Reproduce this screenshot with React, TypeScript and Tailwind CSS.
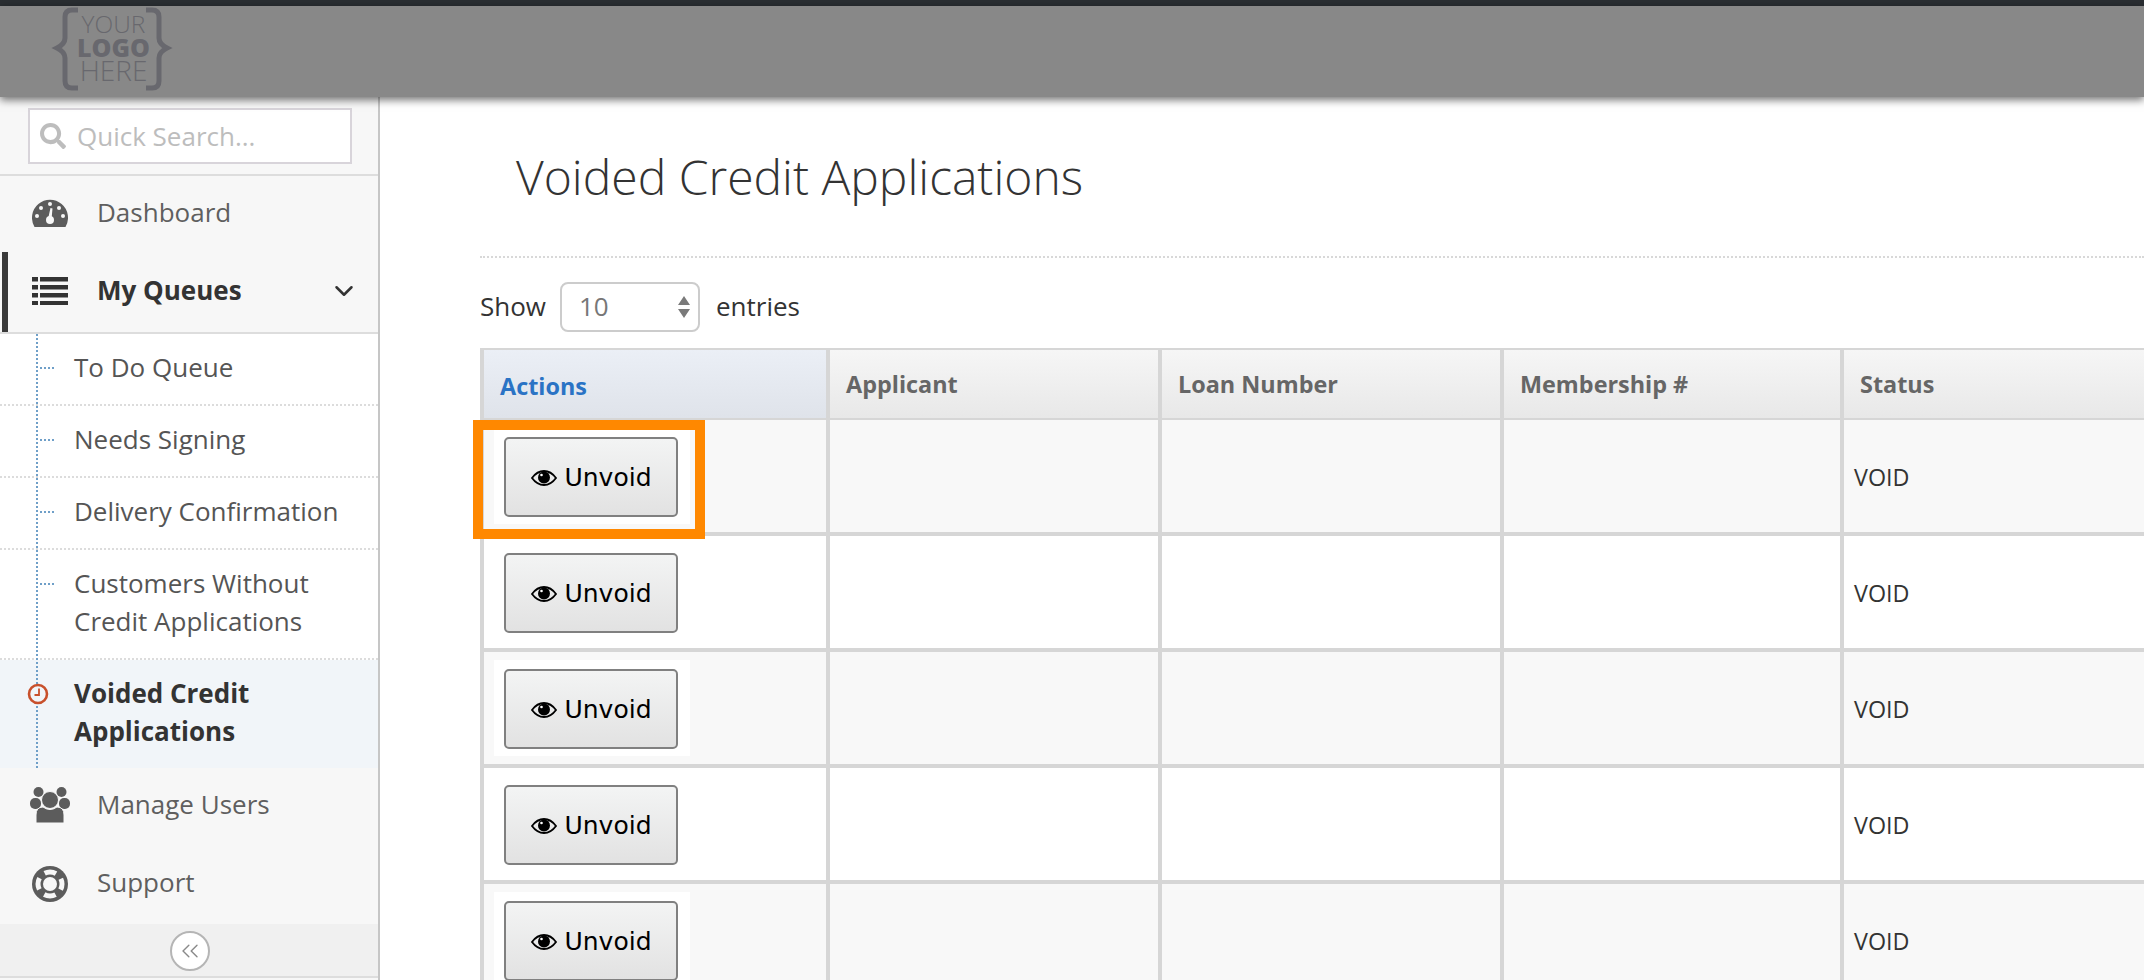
import { FaSearch } from "react-icons/fa";
import { ChevronDown, ChevronsLeft } from "lucide-react";

function Logo() {
  return (
    <svg width="230" height="97" viewBox="0 0 230 97" className="block">
      <g fill="none" stroke="#68686e" strokeWidth="5">
        <path d="M78 10H72Q65 10 65 17V38Q65 44 57 48Q65 52 65 58V81Q65 88 72 88H78" />
        <path d="M146 10H152Q159 10 159 17V38Q159 44 167 48Q159 52 159 58V81Q159 88 152 88H146" />
      </g>
      <g fill="#68686e" fontFamily="'Open Sans', sans-serif" textAnchor="middle">
        <text x="113.500" y="33" fontSize="24.500" fontWeight="300">YOUR</text>
        <text x="113.500" y="57" fontSize="25" fontWeight="800">LOGO</text>
        <text x="113.500" y="81" fontSize="28" fontWeight="300">HERE</text>
      </g>
    </svg>
  );
}

function Eye() {
  return (
    <svg width="26" height="16" viewBox="0 0 26 16" className="block">
      <path d="M1 8C5 2.500 9 1 13 1s8 1.500 12 7c-4 5.500-8 7-12 7S5 13.500 1 8Z" fill="none" stroke="#000" strokeWidth="1.800" />
      <circle cx="13" cy="7.500" r="6" fill="#000" />
      <circle cx="10.500" cy="5" r="1.300" fill="#fff" />
    </svg>
  );
}

function GaugeIcon() {
  return (
    <svg width="36" height="28" viewBox="0 0 36 28" className="block" fill="#5c5c5c">
      <path d="M2.500 28A18 18 0 1 1 33.500 28Z" />
      <g fill="#f7f7f7">
        <circle cx="18" cy="5" r="2" />
        <circle cx="9" cy="9" r="2" />
        <circle cx="27" cy="9" r="2" />
        <circle cx="5" cy="17" r="2" />
        <circle cx="31" cy="17" r="2" />
        <circle cx="18" cy="21" r="4" />
        <path d="M16 20l2.500-11 2 .5-1 11Z" />
      </g>
    </svg>
  );
}

function ListIcon() {
  return (
    <svg width="36" height="28" viewBox="0 0 36 28" className="block" fill="#333333">
      {[0, 8, 16, 24].map((y) => (
        <g key={y}>
          <rect x="0" y={y} width="6" height="4.500" />
          <rect x="8" y={y} width="28" height="4.500" />
        </g>
      ))}
    </svg>
  );
}

function UsersIcon() {
  return (
    <svg width="40" height="37" viewBox="0 0 40 37" className="block" fill="#5c5c5c">
      <circle cx="8.500" cy="5" r="5" />
      <circle cx="31.500" cy="5" r="5" />
      <rect x="0" y="11" width="11" height="11" rx="5" />
      <rect x="29" y="11" width="11" height="11" rx="5" />
      <circle cx="20" cy="13" r="8.500" fill="#5c5c5c" stroke="#f7f7f7" strokeWidth="1" />
      <path d="M6 36V28Q6 20 13 20Q20 25 27 20Q34 20 34 28V36Z" stroke="#f7f7f7" strokeWidth="1" />
    </svg>
  );
}

function RingIcon() {
  return (
    <svg width="36" height="36" viewBox="0 0 36 36" className="block">
      <circle cx="18" cy="18" r="18" fill="#5c5c5c" />
      <circle cx="18" cy="18" r="12" fill="none" stroke="#f7f7f7" strokeWidth="5" strokeDasharray="11.800 7.050" strokeDashoffset="5.900" />
      <circle cx="18" cy="18" r="7" fill="#f7f7f7" />
    </svg>
  );
}

function NavRow({ icon, label, h, pb }: { icon: React.ReactNode; label: string; h: string; pb: string }) {
  return (
    <div className={`relative flex shrink-0 items-center ${h}`}>
      <div className="flex w-[97px] shrink-0 justify-center pl-[3px] pb-[3px]">{icon}</div>
      <span className={`text-[#5f5f5f] ${pb}`}>{label}</span>
    </div>
  );
}

function SubItem({ label }: { label: React.ReactNode }) {
  return (
    <div className="relative border-b-2 border-dotted border-[#dcdcdc] pb-[18px] pl-[74px] pr-3 pt-[14px] text-[#555555]">
      <span className="absolute left-[40px] top-[33px] h-0 w-[14px] border-t-2 border-dotted border-[#6f9fc8]" />
      {label}
    </div>
  );
}

function UnvoidButton({ striped }: { striped: boolean }) {
  return (
    <div className={`ml-[10px] flex h-[96px] w-[196px] items-center justify-center pr-[2px] pt-[2px] ${striped ? "bg-white" : ""}`}>
      <button className="flex h-[80px] w-[174px] items-center justify-center gap-[7px] rounded-[5px] border-2 border-[#808080] bg-gradient-to-b from-[#f3f4f4] to-[#e2e2e2] pl-[1px] pt-[2px] font-['DejaVu_Sans',sans-serif] text-[25px] text-black">
        <Eye />
        Unvoid
      </button>
    </div>
  );
}

const cols = [
  { label: "Applicant", w: "w-[332px]" },
  { label: "Loan Number", w: "w-[342px]" },
  { label: "Membership #", w: "w-[340px]" },
  { label: "Status", w: "" },
];

export default function App() {
  return (
    <div className="relative flex h-[980px] w-[2144px] flex-col overflow-hidden bg-white font-['Open_Sans',sans-serif] text-[26px] leading-[38px]">
      <div className="h-[6px] shrink-0 bg-[#2a2e32]" />
      <header className="relative z-10 h-[91px] shrink-0 bg-[#888888] shadow-[0_3px_8px_rgba(0,0,0,0.55)]">
        <div className="-mt-[6px]">
          <Logo />
        </div>
      </header>
      <div className="flex min-h-0 flex-1">
        <aside className="flex h-[883px] w-[380px] shrink-0 flex-col border-r-2 border-[#c6c6c6] bg-[#f7f7f7]">
          <div className="h-[79px] shrink-0 border-b-2 border-[#dddddd] pl-[28px] pt-[11px]">
            <div className="flex h-[56px] w-[324px] items-center border-2 border-[#d8d4da] bg-white pl-[10px] text-[#bdbdbd]">
              <FaSearch size={26} className="shrink-0" color="#bdbdbd" />
              <span className="ml-[11px]">Quick Search...</span>
            </div>
          </div>
          <NavRow label="Dashboard" h="h-[76px]" pb="pb-[5px]" icon={<GaugeIcon />} />
          <div className="relative flex h-[82px] shrink-0 items-center border-b-2 border-[#dddddd] pb-[2px]">
            <span className="absolute left-[2px] top-0 h-[80px] w-[6px] bg-[#3a3a3a]" />
            <div className="flex w-[97px] shrink-0 justify-center pl-[3px]">
              <ListIcon />
            </div>
            <span className="pb-[3px] font-bold text-[#333333]">My Queues</span>
            <ChevronDown size={30} strokeWidth={2} className="absolute left-[329px] top-[24px] text-[#333333]" />
          </div>
          <div className="relative bg-white">
            <span className="absolute bottom-0 left-[36px] top-0 z-10 border-l-2 border-dotted border-[#6f9fc8]" />
            <SubItem label="To Do Queue" />
            <SubItem label="Needs Signing" />
            <SubItem label="Delivery Confirmation" />
            <SubItem
              label={
                <>
                  Customers Without
                  <br />
                  Credit Applications
                </>
              }
            />
            <div className="relative h-[108px] bg-[#f1f5f9] pl-[74px] pt-[14px] font-bold text-[#333333]">
              <svg width="22" height="22" viewBox="0 0 22 22" className="absolute left-[27px] top-[23px] z-20">
                <circle cx="11" cy="11" r="9" fill="#f1f5f9" stroke="#c8502c" strokeWidth="2.600" />
                <path d="M12 5.500V12H7.500" fill="none" stroke="#c8502c" strokeWidth="1.800" />
              </svg>
              Voided Credit
              <br />
              Applications
            </div>
          </div>
          <NavRow label="Manage Users" h="h-[78px]" pb="pb-[6px]" icon={<UsersIcon />} />
          <NavRow label="Support" h="h-[78px]" pb="pb-[6px]" icon={<RingIcon />} />
          <div className="flex h-[54px] shrink-0 items-center justify-center border-b-2 border-[#dddddd] bg-[#f0f0f0] pl-[2px] pt-[2px]">
            <div className="flex h-[40px] w-[40px] items-center justify-center rounded-full border-2 border-[#b5b5b5] bg-white">
              <ChevronsLeft size={28} strokeWidth={1.200} className="text-[#8a8a8a]" />
            </div>
          </div>
        </aside>
        <main className="min-w-0 flex-1 overflow-hidden pl-[100px]">
          <h1 className="flex h-[161px] items-center border-b-2 border-dotted border-[#d8d8d8] pl-[36px] text-[48px] font-light text-[#333333]">
            Voided Credit Applications
          </h1>
          <div className="flex h-[90px] items-center pt-[8px] text-[#333333]">
            <span className="pb-[2px]">Show</span>
            <div className="relative ml-[14px] mr-[16px] flex h-[50px] w-[140px] items-center rounded-[8px] border-2 border-[#cccccc] pb-[2px] pl-[17px] text-[#777777]">
              10
              <svg width="14" height="24" viewBox="0 0 14 24" className="absolute right-[7px] top-[11px]">
                <path d="M7 1l6 9H1zM7 23l6-9H1z" fill="#7a7a7a" />
              </svg>
            </div>
            <span className="pb-[2px]">entries</span>
          </div>
          <table className="w-[1700px] table-fixed border-separate border-spacing-0 border-t-2 border-[#d6d6d6]">
            <thead>
              <tr className="h-[70px]">
                <th className="w-[346px] border-b-2 border-l-4 border-[#d6d6d6] bg-gradient-to-b from-[#ebeff6] to-[#dfe3ea] pl-[16px] pt-[3px] text-left text-[23.400px] font-bold text-[#2a73c5]">
                  Actions
                </th>
                {cols.map((c) => (
                  <th
                    key={c.label}
                    className={`border-b-2 border-l-4 border-[#d6d6d6] bg-gradient-to-b from-[#f6f6f6] to-[#e8e8e8] pb-[1px] pl-[16px] text-left text-[23.400px] font-bold text-[#666666] ${c.w}`}
                  >
                    {c.label}
                  </th>
                ))}
              </tr>
            </thead>
            <tbody>
              {[0, 1, 2, 3, 4].map((r) => {
                const striped = r % 2 === 0;
                return (
                  <tr key={r} className={`h-[116px] ${striped ? "bg-[#f8f8f8]" : "bg-white"}`}>
                    <td className="border-b-4 border-l-4 border-[#d6d6d6]">
                      <UnvoidButton striped={striped} />
                    </td>
                    <td className="border-b-4 border-l-4 border-[#d6d6d6]" />
                    <td className="border-b-4 border-l-4 border-[#d6d6d6]" />
                    <td className="border-b-4 border-l-4 border-[#d6d6d6]" />
                    <td className="border-b-4 border-l-4 border-[#d6d6d6] pl-[10px] pt-[2px] text-[23.300px] text-[#333333]">VOID</td>
                  </tr>
                );
              })}
            </tbody>
          </table>
        </main>
      </div>
      <div className="pointer-events-none absolute left-[473px] top-[420px] z-20 h-[119px] w-[232px] border-[10px] border-[#ff8800]" />
    </div>
  );
}
